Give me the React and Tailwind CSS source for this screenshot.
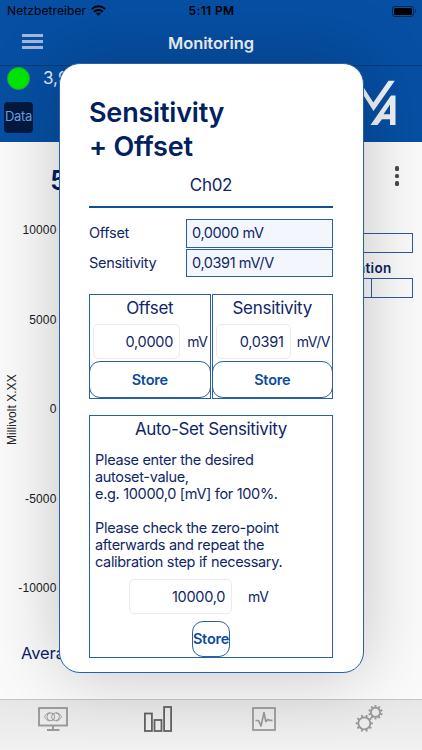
import React from 'react';

const AXIS_TICKS = ['10000', '5000', '0', '-5000', '-10000'];

const StatusBar = () => (
  <div className="flex h-[22px] items-center justify-between pl-[7px] pr-[6px] text-black">
    <div className="flex w-[150px] items-center gap-[5px]">
      <span className="text-[12px] tracking-[0.1px]">Netzbetreiber</span>
      <svg className="mt-[-1px] h-[11px] w-[15px]" viewBox="0 0 15 11" fill="none" stroke="currentColor" strokeWidth="2">
        <path d="M0.8 4.1C4.6 0.4 10.4 0.4 14.2 4.1" />
        <path d="M3.1 6.7C5.6 4.3 9.4 4.3 11.9 6.7" />
        <path d="M7.5 10.8L5 8.3C6.4 7.1 8.6 7.1 10 8.3Z" fill="currentColor" stroke="none" />
      </svg>
    </div>
    <span className="text-[12px] font-semibold tracking-[0.35px]">5:11 PM</span>
    <div className="flex w-[150px] items-center justify-end gap-px">
      <div className="h-[11px] w-[22px] rounded-[3px] border border-black/50 p-px">
        <div className="h-full rounded-[1.5px] bg-black" />
      </div>
      <div className="h-[4px] w-[1.5px] rounded-r bg-black/50" />
    </div>
  </div>
);

const NavBar = () => (
  <div className="flex h-[43px] items-center justify-between px-[22px]">
    <div className="mt-[-4px] flex w-[21px] flex-col gap-[3px]">
      <div className="h-[3px] bg-[#a3b9dc]" />
      <div className="h-[3px] bg-[#a3b9dc]" />
      <div className="h-[3px] bg-[#a3b9dc]" />
    </div>
    <h1 className="text-[16.500px] font-semibold tracking-[-0.1px] text-[#f2f5fa]">Monitoring</h1>
    <div className="w-[21px]" />
  </div>
);

const DeviceHeader = () => (
  <div className="flex h-[76.5px] justify-between border-t border-[#0a3b7c]">
    <div className="flex flex-col pl-1">
      <div className="flex items-center pl-[3px]">
        <div className="size-[23px] rounded-full border border-[#2f9a55] bg-[#00e600]" />
        <span className="ml-[13px] text-[17px] text-[#e3eaf5]">3,9 V</span>
      </div>
      <button className="mt-[10px] h-[31px] w-[29px] rounded-[4px] bg-[#03193f] text-[13px] tracking-[-0.3px] text-[#6c9fe0]">
        Data
      </button>
    </div>
    <svg className="mt-[14px] mr-[26px] h-[45px] w-[44px]" viewBox="352 80 44 45" fill="#f1f2f5">
      <path d="M352 77H357L373.300 102.500L388.500 80.800H394.800L373.500 111Z" />
      <path fillRule="evenodd" d="M391 95.500H395.500V125H390V119.300H382L377.500 125H370.500L391 95.500ZM390 104.500L383.500 114.300H390Z" />
    </svg>
  </div>
);

const Chart = () => (
  <div className="flex h-[448px] pt-[80.500px]">
    <div className="mt-[153px] mr-[-3px] ml-[3px] h-[70px] w-[18px] text-[12px] leading-[18px] whitespace-nowrap [writing-mode:vertical-rl] rotate-180 tracking-[0.05px] text-[#222] font-['Liberation_Sans',sans-serif]">
      Millivolt X.XX
    </div>
    <div className="flex w-[38.500px] flex-col gap-[73.600px] text-right text-[12px] leading-4 text-[#1c1c1c] font-['Liberation_Sans',sans-serif]">
      {AXIS_TICKS.map((tick) => (
        <span key={tick} className="flex justify-end whitespace-nowrap tracking-[0.15px]">{tick}</span>
      ))}
    </div>
  </div>
);

const ChannelPanel = () => (
  <div className="flex flex-col">
    <div className="flex h-[43px] items-end justify-between pl-[50px] pr-[23px]">
      <span className="mb-[-17px] text-[27px] font-semibold text-[#001d66]">5,3</span>
      <div className="mb-[-1px] flex flex-col gap-[3px]">
        <div className="size-[4.500px] rounded-[1.5px] bg-[#4a4a4a]" />
        <div className="size-[4.500px] rounded-[1.5px] bg-[#4a4a4a]" />
        <div className="size-[4.500px] rounded-[1.5px] bg-[#4a4a4a]" />
      </div>
    </div>
    <div className="mt-[-43px] flex">
      <Chart />
      <div className="ml-auto flex w-[84px] flex-col pt-[91.500px] pr-[9.500px]">
        <div className="h-[20px] border border-[#2c5c9e]" />
        <span className="mt-[5px] self-end pr-[21px] text-[13.500px] leading-[20px] font-semibold tracking-[0.300px] text-[#0b1f5c]">Calibration</span>
        <div className="flex h-[20px] border border-[#2c5c9e]">
          <div className="w-[33px] border-r border-[#2c5c9e]" />
        </div>
      </div>
    </div>
    <span className="mt-[51px] pl-[21px] text-[16.500px] leading-[24px] tracking-[-0.1px] text-[#0b1f6b]">Average</span>
  </div>
);

// one cog, drawn around its own center
const Gear = ({ x, y, r, turn }) => (
  <g transform={`translate(${x} ${y}) rotate(${turn})`}>
    <circle r={r} fill="none" strokeWidth="1.800" />
    {[0, 36, 72, 108, 144, 180, 216, 252, 288, 324].map((a) => (
      <path key={a} d={`M0 ${-r - 0.5}V${-r - 2.6}`} strokeWidth="1.900" transform={`rotate(${a})`} />
    ))}
  </g>
);

const TabBar = () => (
  <nav className="flex h-[51px] border-t border-[#c6c6c6] bg-linear-to-b from-[#e7e7e7] to-[#f1f1f1]">
    <div className="flex flex-1 justify-center pt-[7px]">
      <svg className="h-[25px] w-[30px]" viewBox="0 0 30 25" fill="none" stroke="#9a9a9a">
        <rect x="1" y="1" width="28" height="17.500" strokeWidth="1.900" />
        <path d="M15 18.500V23M9 23H21.500" strokeWidth="1.900" />
        <circle cx="12.800" cy="9.800" r="3.900" />
        <circle cx="17.500" cy="9.800" r="3.900" />
        <path d="M6.500 9.800C7.700 7.300 9 6.100 12 5.600M6.500 9.800C7.700 12.300 9 13.500 12 14M23.500 9.800C22.300 7.300 21 6.100 18 5.600M23.500 9.800C22.300 12.300 21 13.500 18 14" strokeWidth="0.900" />
      </svg>
    </div>
    <div className="flex flex-1 justify-center pt-[6px]">
      <svg className="h-[26px] w-[28px]" viewBox="0 0 28 26" fill="none" stroke="#626262" strokeWidth="1.800">
        <rect x="0.900" y="7.500" width="7" height="17.500" />
        <rect x="10.500" y="14" width="7" height="11" />
        <rect x="20.100" y="1" width="7" height="24" />
      </svg>
    </div>
    <div className="flex flex-1 justify-center pt-[7px]">
      <svg className="size-[24px]" viewBox="0 0 24 24" fill="none" stroke="#9a9a9a">
        <rect x="1" y="1" width="22" height="22" strokeWidth="1.800" />
        <path d="M3.500 13.500H6.500L9 19L12 5.500L13.800 14.500L16 12.500L17.500 13.300H20.500" strokeWidth="1.700" strokeLinejoin="round" />
      </svg>
    </div>
    <div className="flex flex-1 justify-center pt-[4px]">
      <svg className="h-[29px] w-[28px]" viewBox="0 0 28 29" fill="none" stroke="#979797">
        <Gear x={9.300} y={19.3} r={6} turn={18} />
        <Gear x={20.500} y={8.300} r={4.600} turn={0} />
      </svg>
    </div>
  </nav>
);

const ValueRow = ({ label, value }) => (
  <div className="flex h-[28.500px] items-center">
    <span className="w-[97px] text-[14.500px] tracking-[-0.3px]">{label}</span>
    <div className="flex h-full flex-1 items-center border border-[#2860a8] bg-[#f3f7fd] pl-[5px] text-[14.500px] tracking-[-0.4px]">
      {value}
    </div>
  </div>
);

const ValueInput = ({ value, className }) => (
  <input
    readOnly
    value={value}
    className={`h-[35px] rounded-[5px] border border-[#ebebeb] bg-white pr-[6px] text-right text-[14.500px] tracking-[-0.300px] outline-none ${className}`}
  />
);

const StoreButton = ({ className }) => (
  <button className={`flex h-[37px] items-center justify-center rounded-[11px] border border-[#2860a8] text-[14.500px] font-semibold tracking-[-0.200px] text-[#0a4a9c] ${className}`}>
    Store
  </button>
);

const SetCard = ({ title, value, unit, inputClass }) => (
  <div className="flex h-[105px] w-[121.500px] flex-col border border-[#2860a8]">
    <h3 className="text-center text-[17px] leading-[26px] tracking-[-0.300px]">{title}</h3>
    <div className="mt-[3px] flex items-center justify-between pl-[3px] pr-[2px]">
      <ValueInput value={value} className={inputClass} />
      <span className="text-[14px] tracking-[-0.500px]">{unit}</span>
    </div>
    <StoreButton className="mx-[-1px] mt-[2px]" />
  </div>
);

const CalibrationDialog = () => (
  <div className="absolute top-[63px] left-[59px] flex h-[610px] w-[304.500px] flex-col rounded-[21px] border border-[#2860a8] bg-white pt-[32px] pr-[29.500px] pl-[29px] text-[#0f2668] shadow-[0_0_70px_rgba(0,0,0,0.22)]">
    <h2 className="text-[27px] leading-[34px] font-semibold tracking-[-0.200px] text-[#00205f]">
      Sensitivity
      <br />+ Offset
    </h2>
    <p className="mt-[10px] text-center text-[17px] leading-[22px] tracking-[-0.300px]">Ch02</p>
    <div className="mt-[10px] h-[2px] shrink-0 bg-[#124e9c]" />
    <div className="mt-[11px] flex flex-col gap-[1px]">
      <ValueRow label="Offset" value="0,0000 mV" />
      <ValueRow label="Sensitivity" value="0,0391 mV/V" />
    </div>
    <div className="mt-[17px] flex justify-between">
      <SetCard title="Offset" value="0,0000" unit="mV" inputClass="w-[87px]" />
      <SetCard title="Sensitivity" value="0,0391" unit="mV/V" inputClass="w-[75px]" />
    </div>
    <div className="mt-[16px] flex h-[242.500px] flex-col border border-[#2860a8]">
      <h3 className="text-center text-[17px] leading-[26px] tracking-[-0.350px]">Auto-Set Sensitivity</h3>
      <div className="mt-[9px] pl-[5px] text-[14.500px] leading-[17px] tracking-[-0.320px] whitespace-nowrap">
        <p>Please enter the desired<br />autoset-value,<br />e.g. 10000,0 [mV] for 100%.</p>
        <p className="mt-[17px]">Please check the zero-point<br />afterwards and repeat the<br />calibration step if necessary.</p>
      </div>
      <div className="mt-[9px] flex items-center pl-[39px]">
        <ValueInput value="10000,0" className="w-[103px]" />
        <span className="ml-[16px] text-[14px] tracking-[-0.300px]">mV</span>
      </div>
      <StoreButton className="mt-[7px] w-[38px] self-center" />
    </div>
  </div>
);

const App = () => {
  return (
    <div className="relative flex h-[750px] w-[422px] flex-col overflow-hidden bg-[#fafafa] font-['Inter',sans-serif]">
      <header className="bg-[#064fa3]">
        <StatusBar />
        <NavBar />
        <DeviceHeader />
      </header>
      <main className="flex-1 overflow-hidden">
        <ChannelPanel />
      </main>
      <TabBar />
      <CalibrationDialog />
    </div>
  );
};

export default App;
